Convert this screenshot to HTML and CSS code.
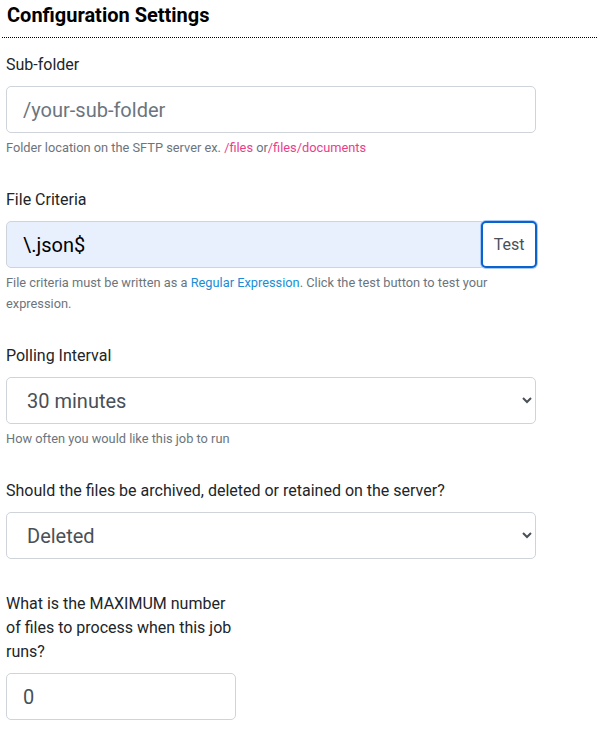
FILE: index.html
```html
<!DOCTYPE html>
<html lang="en">
<head>
<meta charset="utf-8">
<title>Configuration Settings</title>
<link rel="stylesheet" href="styles.css">
</head>
<body>
<div class="page">
  <h2 class="title">Configuration Settings</h2>
  <form class="form">
    <div class="field">
      <label class="label" for="sub">Sub-folder</label>
      <input class="control" id="sub" type="text" placeholder="/your-sub-folder">
      <div class="help">Folder location on the SFTP server ex. <span class="code">/files</span> or<span class="code">/files/documents</span></div>
    </div>
    <div class="field">
      <label class="label" for="crit">File Criteria</label>
      <div class="group">
        <input class="control control-filled" id="crit" type="text" value="\.json$">
        <button type="button" class="btn-test">Test</button>
      </div>
      <div class="help">File criteria must be written as a <a class="link" href="#">Regular Expression</a>. Click the test button to test your expression.</div>
    </div>
    <div class="field">
      <label class="label" for="poll">Polling Interval</label>
      <select class="control select" id="poll">
        <option>30 minutes</option>
      </select>
      <div class="help">How often you would like this job to run</div>
    </div>
    <div class="field field-gap">
      <label class="label" for="arch">Should the files be archived, deleted or retained on the server?</label>
      <select class="control select" id="arch">
        <option>Deleted</option>
      </select>
    </div>
    <div class="field narrow">
      <label class="label" for="max">What is the MAXIMUM number of files to process when this job runs?</label>
      <input class="control" id="max" type="text" value="0">
    </div>
  </form>
</div>
</body>
</html>
```
FILE: styles.css
```css
* { box-sizing: border-box; }
html, body { margin: 0; padding: 0; background: #fff; }
body {
  font-family: Roboto, "Liberation Sans", Arial, sans-serif;
  color: #212529;
}
.page { padding-left: 6px; }
.title {
  margin: 0;
  padding: 3px 0 10px 1px;
  font-size: 20px;
  line-height: 24px;
  font-weight: 700;
  color: #000;
  border-bottom: 1px dotted #000;
  margin-left: -4px;
  padding-left: 5px;
}
.form {
  width: 530px;
  margin-top: 15px;
}
.field { margin-bottom: 30px; }
.field-gap { margin-bottom: 33px; }
.label {
  display: block;
  font-size: 16px;
  line-height: 24px;
  margin-bottom: 9px;
  color: #212529;
}
.control {
  display: block;
  width: 100%;
  height: 47px;
  padding: 0 16px;
  font-family: Roboto, "Liberation Sans", Arial, sans-serif;
  font-size: 20px;
  color: #495057;
  background: #fff;
  border: 1px solid #ced4da;
  border-radius: 5px;
  outline: none;
}
.control::placeholder { color: #6c757d; }
.control-filled {
  background: #e8f0fe;
  color: #000;
  border-radius: 5px 0 0 5px;
  flex: 1;
  width: auto;
  min-width: 0;
}
.select { padding-left: 16px; }
.group { display: flex; width: 531px; }
.btn-test {
  width: 56px;
  height: 47px;
  margin-left: -1px;
  font-family: Roboto, "Liberation Sans", Arial, sans-serif;
  font-size: 16px;
  color: #495057;
  background: #fff;
  border: 2px solid #0a62cc;
  border-radius: 5px;
  box-shadow: 0 0 0 1px #a9c8f5;
  padding: 0;
}
.help {
  margin-top: 4px;
  font-size: 12.8px;
  line-height: 21px;
  color: #6c757d;
}
.code { color: #e83e8c; }
.link { color: #1a8dd6; text-decoration: none; }
.narrow { width: 230px; }
```
